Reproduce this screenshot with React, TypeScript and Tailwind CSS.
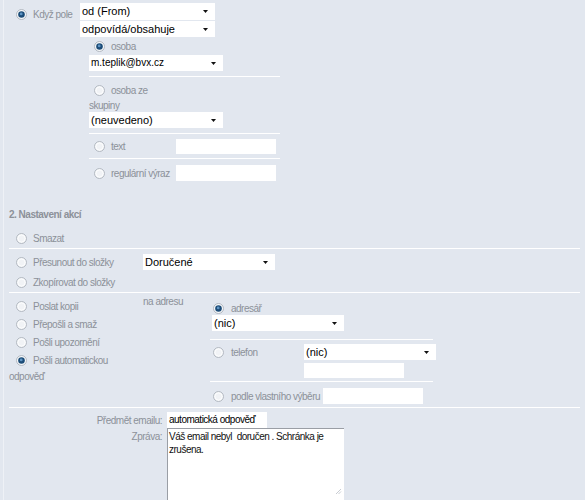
import React from "react";

function Radio({ checked }: { checked?: boolean }) {
  return (
    <svg width="11" height="11" viewBox="0 0 11 11" className="shrink-0 block">
      <circle cx="5.5" cy="5.5" r="5" fill="#f1f3f6" stroke="#b3b9c1" strokeWidth="1" />
      <circle cx="5.5" cy="5.5" r="3.6" fill="none" stroke="#ffffff" strokeWidth="0.8" />
      {checked && (
        <>
          <circle cx="5.5" cy="5.5" r="3.3" fill="#1c4c78" />
          <circle cx="5.2" cy="4.9" r="1.4" fill="#5f95c4" />
        </>
      )}
    </svg>
  );
}

function Tri() {
  return (
    <svg width="5" height="3" viewBox="0 0 5 3" className="shrink-0 block">
      <path d="M0 0H5L2.5 3Z" fill="#111" />
    </svg>
  );
}

function Sel({ text, className }: { text: string; className: string }) {
  return (
    <div
      className={
        "flex items-center justify-between bg-white pl-[2px] pr-[7px] text-black leading-none " +
        className
      }
    >
      <span>{text}</span>
      <Tri />
    </div>
  );
}

const lbl = "text-[10px] tracking-[-0.5px] leading-[11px] text-[#8c9199] whitespace-nowrap";

function Line({ className }: { className: string }) {
  return <div className={"h-px bg-white " + className} />;
}

export default function App() {
  return (
    <div className="w-[585px] h-[500px] overflow-hidden bg-[#e2e7ef] font-['Liberation_Sans',Arial,sans-serif]">
      <div className="ml-[3px] h-full border-l border-[#eef1f6]">
        {/* Section 1 */}
        <div className="pt-[3px] flex">
          <div className="w-[76px] pt-[6px]">
            <div className="flex items-center h-[11px] pl-[12px] gap-[6px]">
              <Radio checked />
              <span className={lbl}>Když pole</span>
            </div>
          </div>
          <div className="flex flex-col gap-px">
            <Sel text="od (From)" className="w-[135px] h-[17px] text-[11px]" />
            <Sel text="odpovídá/obsahuje" className="w-[135px] h-[16px] text-[11px]" />
          </div>
        </div>

        <div className="ml-[85px] w-[191px]">
          <div className="mt-px h-[16px] flex items-center pl-[5px] gap-[6px]">
            <Radio checked />
            <span className={lbl}>osoba</span>
          </div>
          <Sel text="m.teplik@bvx.cz" className="mt-px w-[134px] h-[16px] text-[10px]" />
          <Line className="mt-[5px] w-[191px]" />
          <div className="mt-[5px] h-[16px] flex items-center pl-[5px] gap-[6px]">
            <Radio />
            <span className={lbl}>osoba ze</span>
          </div>
          <div className="h-[14px] flex items-center">
            <span className={lbl}>skupiny</span>
          </div>
          <Sel text="(neuvedeno)" className="w-[134px] h-[16px] text-[11px]" />
          <Line className="mt-[5px] w-[191px]" />
          <div className="mt-[5px] h-[15px] flex items-center">
            <div className="w-[87px] flex items-center pl-[5px] gap-[6px]">
              <Radio />
              <span className={lbl}>text</span>
            </div>
            <div className="w-[100px] h-[15px] bg-white" />
          </div>
          <Line className="mt-[4px] w-[191px]" />
          <div className="mt-[6px] h-[16px] flex items-center">
            <div className="w-[87px] flex items-center pl-[5px] gap-[6px]">
              <Radio />
              <span className={lbl}>regulární výraz</span>
            </div>
            <div className="w-[100px] h-[16px] bg-white" />
          </div>
        </div>

        {/* Section 2 */}
        <div className="mt-[26px] h-[14px] pl-[5px] flex items-center">
          <span className={lbl + " font-bold text-[#7d838c]"}>2. Nastavení akcí</span>
        </div>
        <div className="mt-[9px] h-[16px] pl-[12px] flex items-center gap-[6px]">
          <Radio />
          <span className={lbl}>Smazat</span>
        </div>
        <Line className="mt-[2px] ml-[5px] w-[571px]" />
        <div className="mt-[5px] h-[16px] flex items-center">
          <div className="w-[139px] pl-[12px] flex items-center gap-[6px]">
            <Radio />
            <span className={lbl}>Přesunout do složky</span>
          </div>
          <Sel text="Doručené" className="w-[132px] h-[16px] text-[11px]" />
        </div>
        <div className="mt-[4px] h-[16px] pl-[12px] flex items-center gap-[6px]">
          <Radio />
          <span className={lbl}>Zkopírovat do složky</span>
        </div>
        <Line className="mt-[2px] ml-[5px] w-[571px]" />

        <div className="flex items-start">
          <div className="w-[139px] pt-[4px]">
            {["Poslat kopii", "Přepošli a smaž", "Pošli upozornění", "Pošli automatickou"].map(
              (t, i) => (
                <div key={t} className="h-[18px] pl-[12px] flex items-center gap-[6px]">
                  <Radio checked={i === 3} />
                  <span className={lbl}>{t}</span>
                </div>
              )
            )}
            <div className="h-[14px] pl-[5px] flex items-center">
              <span className={lbl}>odpověď</span>
            </div>
          </div>
          <div className="w-[69px] pt-[1px]">
            <div className="h-[14px] flex items-center">
              <span className={lbl}>na adresu</span>
            </div>
          </div>
          <div className="w-[224px] pt-[9px]">
            <div className="h-[13px] pl-px flex items-center gap-[7px]">
              <Radio checked />
              <span className={lbl}>adresář</span>
            </div>
            <Sel text="(nic)" className="w-[132px] h-[16px] text-[11px]" />
            <Line className="mt-[8px] -ml-[2px] w-[223px]" />
            <div className="mt-[4px] flex items-start">
              <div className="w-[111px] h-[16px] pl-px flex items-center gap-[7px]">
                <Radio />
                <span className={lbl}>telefon</span>
              </div>
              <div>
                <Sel text="(nic)" className="w-[132px] h-[16px] text-[11px]" />
                <div className="mt-[3px] w-[100px] h-[15px] bg-white" />
              </div>
            </div>
            <Line className="mt-[3px] -ml-[2px] w-[223px]" />
            <div className="mt-[6px] h-[16px] flex items-center">
              <div className="w-[111px] pl-px flex items-center gap-[7px]">
                <Radio />
                <span className={lbl}>podle vlastního výběru</span>
              </div>
              <div className="w-[100px] h-[16px] bg-white" />
            </div>
          </div>
        </div>
        <Line className="mt-[3px] ml-[5px] w-[571px]" />

        <div className="mt-[4px] flex items-center gap-[5px]">
          <div className={"w-[158px] text-right " + lbl}>Předmět emailu:</div>
          <div className="w-[100px] h-[16px] bg-white pl-[2px] flex items-center text-[10px] tracking-[-0.5px] text-black leading-none whitespace-nowrap">
            automatická odpověď
          </div>
        </div>
        <div className="flex items-start gap-[5px]">
          <div className={"w-[158px] text-right pt-[3px] " + lbl}>Zpráva:</div>
          <div className="relative w-[177px] h-[90px] bg-white border-t border-l border-[#9a9ea5] px-px pt-px text-[10px] tracking-[-0.5px] leading-[13px] text-[#111] whitespace-pre-wrap">
            {"Váš email nebyl  doručen . Schránka je zrušena."}
            <svg width="7" height="7" viewBox="0 0 7 7" className="absolute right-[2px] top-[59px]">
              <path d="M6 1L1 6M6 3.5L3.5 6" stroke="#c8ccd2" strokeWidth="1" />
            </svg>
          </div>
        </div>
      </div>
    </div>
  );
}
